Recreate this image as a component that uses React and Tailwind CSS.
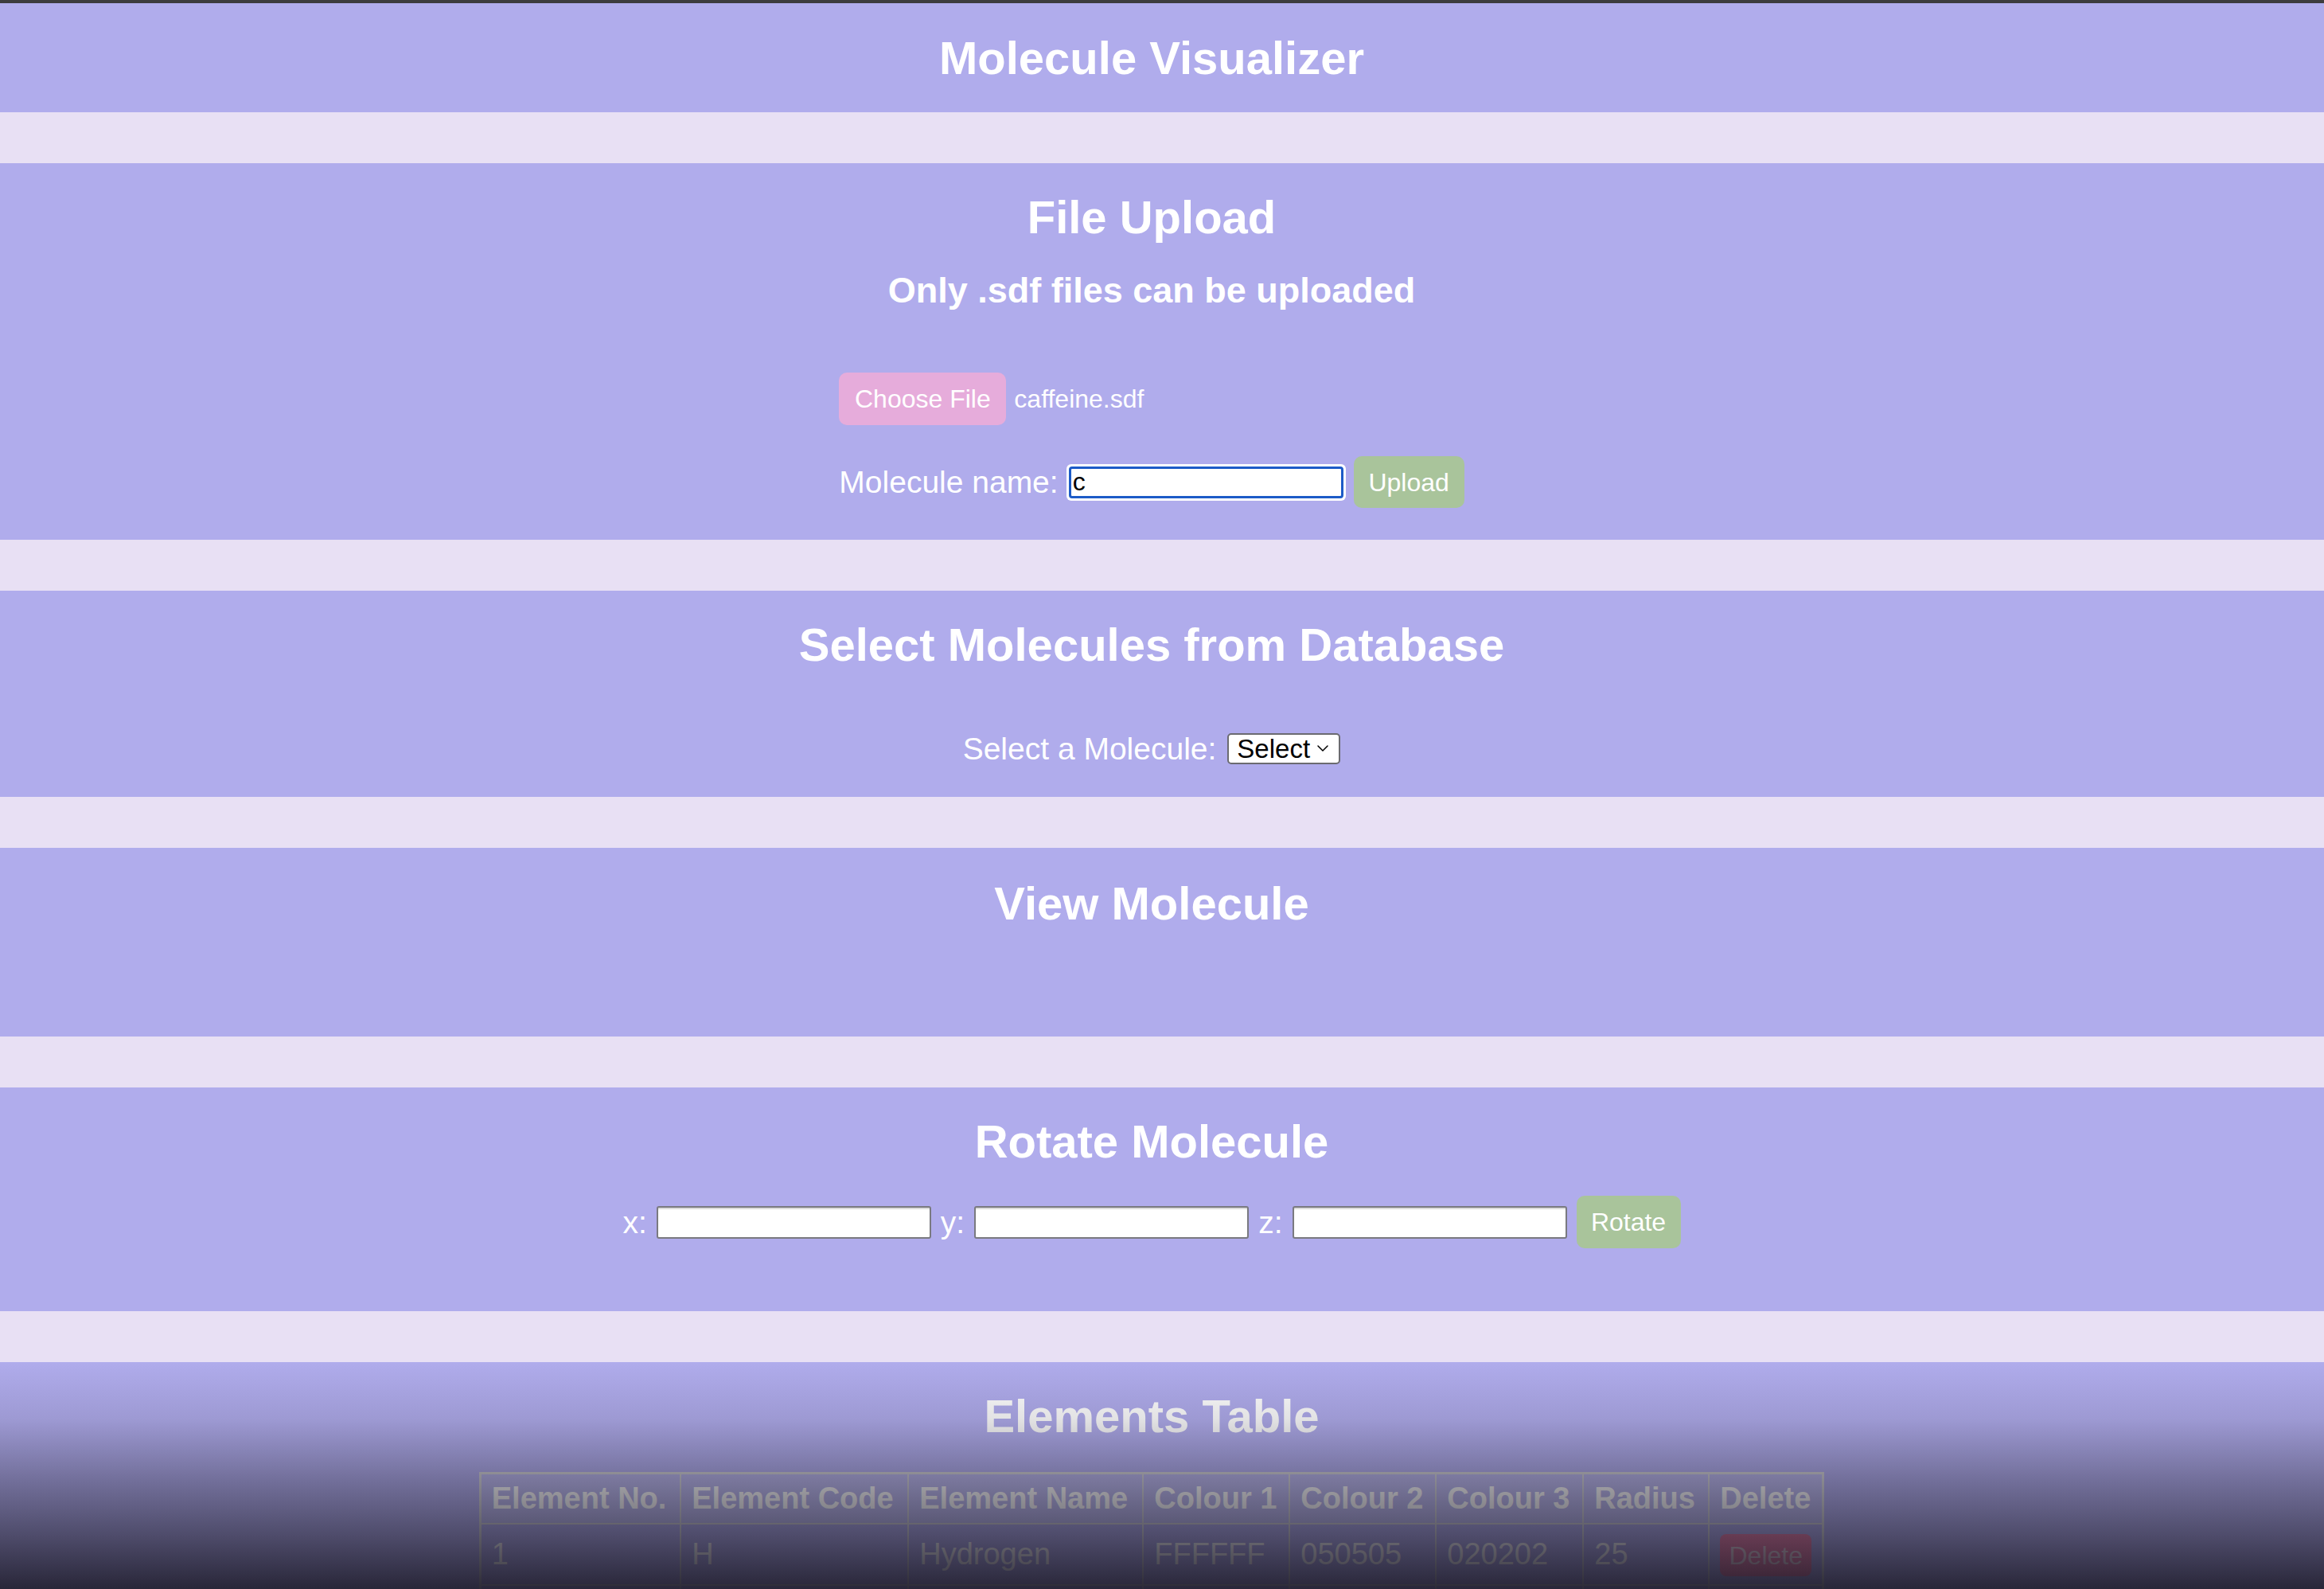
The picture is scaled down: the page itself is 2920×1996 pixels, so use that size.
import { ChevronDown } from 'lucide-react'

const rows = [
  { no: '1', code: 'H', name: 'Hydrogen', c1: 'FFFFFF', c2: '050505', c3: '020202', radius: '25' },
  { no: '2', code: 'C', name: 'Carbon', c1: '808080', c2: '010101', c3: '000000', radius: '40' },
]

const headers = ['Element No.', 'Element Code', 'Element Name', 'Colour 1', 'Colour 2', 'Colour 3', 'Radius', 'Delete']
const widths = ['w-[252px]', 'w-[286px]', 'w-[295px]', 'w-[184px]', 'w-[184px]', 'w-[185px]', 'w-[158px]', 'w-[143px]']

function Heading({ children }) {
  return <h2 className="text-[58px] font-bold leading-[67px] text-white">{children}</h2>
}

function TextBox() {
  return (
    <input
      type="text"
      className="h-[41px] w-[345px] rounded-[3px] border-2 border-[#7a7a80] bg-white shadow-[inset_0_2px_1px_rgba(0,0,0,0.15)]"
    />
  )
}

export default function App() {
  return (
    <div className="relative h-[1996px] overflow-hidden bg-[#e8e0f4] font-['Liberation_Sans',Arial,sans-serif]">
      <div className="h-[4px] bg-[#3c3c3e]" />

      <div className="flex flex-col gap-[64px]">
        {/* title */}
        <header className="flex h-[137px] items-center justify-center bg-[#b0acec] pr-[26px]">
          <h1 className="text-[58px] font-bold leading-none text-white">Molecule Visualizer</h1>
        </header>

        {/* upload */}
        <section className="flex h-[473px] flex-col items-center bg-[#b0acec] pr-[26px] pt-[34px]">
          <Heading>File Upload</Heading>
          <p className="mt-[33px] text-[45px] font-bold leading-[52px] text-white">Only .sdf files can be uploaded</p>
          <form className="mt-[77px] flex flex-col items-start gap-[39px]" onSubmit={(e) => e.preventDefault()}>
            <div className="flex items-center gap-[10px]">
              <button type="button" className="h-[66px] w-[210px] rounded-[10px] bg-[#e6acdb] text-[32px] text-white">
                Choose File
              </button>
              <span className="text-[32px] text-white">caffeine.sdf</span>
            </div>
            <div className="flex items-center gap-[10px]">
              <label className="text-[39px] leading-none text-white">Molecule name:</label>
              <div className="rounded-[6px] bg-white p-[3px]">
                <input
                  type="text"
                  defaultValue="c"
                  className="h-[40px] w-[345px] rounded-[4px] border-[3px] border-[#1c5bc7] bg-white px-[2px] text-[32px] leading-none text-black outline-none"
                />
              </div>
              <button type="submit" className="h-[65px] w-[139px] rounded-[10px] bg-[#a9c49b] text-[32px] text-white">
                Upload
              </button>
            </div>
          </form>
        </section>

        {/* select */}
        <section className="flex h-[259px] flex-col items-center bg-[#b0acec] pr-[26px] pt-[34px]">
          <Heading>Select Molecules from Database</Heading>
          <div className="mt-[74px] flex h-[46px] items-center gap-[14px]">
            <span className="text-[39px] leading-none text-white">Select a Molecule:</span>
            <div className="flex h-[39px] w-[142px] items-center justify-between rounded-[5px] border-2 border-[#6b6b70] bg-white pl-[10px] pr-[8px]">
              <span className="text-[33px] leading-none text-black">Select</span>
              <ChevronDown size={24} strokeWidth={1.5} className="text-black" />
            </div>
          </div>
        </section>

        {/* view */}
        <section className="flex h-[237px] flex-col items-center bg-[#b0acec] pr-[26px] pt-[36px]">
          <Heading>View Molecule</Heading>
        </section>

        {/* rotate */}
        <section className="flex h-[281px] flex-col items-center bg-[#b0acec] pr-[26px] pt-[34px]">
          <Heading>Rotate Molecule</Heading>
          <div className="mt-[35px] flex h-[66px] items-center gap-[12px]">
            <span className="text-[39px] leading-none text-white">x:</span>
            <TextBox />
            <span className="text-[39px] leading-none text-white">y:</span>
            <TextBox />
            <span className="text-[39px] leading-none text-white">z:</span>
            <TextBox />
            <button type="button" className="h-[66px] w-[131px] rounded-[10px] bg-[#a9c49b] text-[32px] text-white">
              Rotate
            </button>
          </div>
        </section>

        {/* elements */}
        <section className="flex h-[400px] flex-col items-center bg-[#b0acec] pr-[26px] pt-[34px]">
          <Heading>Elements Table</Heading>
          <table className="mt-[37px] table-fixed border-collapse border-[3px] border-[#d4d4d8] text-left text-[38px] text-white">
            <thead>
              <tr className="h-[63px] bg-white/15">
                {headers.map((h, i) => (
                  <th key={h} className={`${widths[i]} border-2 border-[#d4d4d8] px-[13px] font-bold leading-none`}>
                    {h}
                  </th>
                ))}
              </tr>
            </thead>
            <tbody>
              {rows.map((r) => (
                <tr key={r.no} className="h-[77px]">
                  <td className="border-2 border-[#d4d4d8] px-[13px]">{r.no}</td>
                  <td className="border-2 border-[#d4d4d8] px-[13px]">{r.code}</td>
                  <td className="border-2 border-[#d4d4d8] px-[13px]">{r.name}</td>
                  <td className="border-2 border-[#d4d4d8] px-[13px]">{r.c1}</td>
                  <td className="border-2 border-[#d4d4d8] px-[13px]">{r.c2}</td>
                  <td className="border-2 border-[#d4d4d8] px-[13px]">{r.c3}</td>
                  <td className="border-2 border-[#d4d4d8] px-[13px]">{r.radius}</td>
                  <td className="border-2 border-[#d4d4d8] px-[13px]">
                    <button type="button" className="h-[53px] w-[115px] rounded-[8px] bg-[#f27fa9] text-[32px] text-[#f4dbe4]">
                      Delete
                    </button>
                  </td>
                </tr>
              ))}
            </tbody>
          </table>
        </section>
      </div>

      {/* bottom fade over the page */}
      <div className="pointer-events-none absolute inset-x-0 bottom-0 h-[285px] bg-[linear-gradient(to_bottom,rgba(22,20,32,0)_0%,rgba(22,20,32,0.12)_25%,rgba(22,20,32,0.38)_50%,rgba(22,20,32,0.62)_75%,rgba(22,20,32,0.88)_100%)]" />
    </div>
  )
}
